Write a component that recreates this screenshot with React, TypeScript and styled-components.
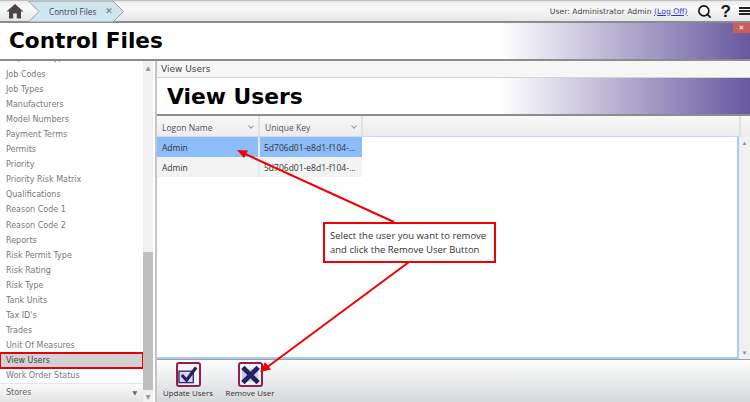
import styled, { createGlobalStyle } from "styled-components";
import { Search } from "lucide-react";

const MENU_ITEMS = [
  "Inspection Types",
  "Job Codes",
  "Job Types",
  "Manufacturers",
  "Model Numbers",
  "Payment Terms",
  "Permits",
  "Priority",
  "Priority Risk Matrix",
  "Qualifications",
  "Reason Code 1",
  "Reason Code 2",
  "Reports",
  "Risk Permit Type",
  "Risk Rating",
  "Risk Type",
  "Tank Units",
  "Tax ID's",
  "Trades",
  "Unit Of Measures",
  "View Users",
  "Work Order Status",
];

const GlobalStyle = createGlobalStyle`
  html, body {
    margin: 0;
    padding: 0;
    background: #fff;
  }
  * {
    box-sizing: border-box;
  }
`;

export default function App() {
  return (
    <Page>
      <GlobalStyle />
      <TopBar>
        <HomeCell>
          <svg width="18" height="16" viewBox="0 0 18 16">
            <path d="M9 1 L17.5 8.6 H15 V15.5 H10.8 V10.5 H7.2 V15.5 H3 V8.6 H.5 Z" fill="#4a4348" />
          </svg>
        </HomeCell>
        <Tab>
          <TabShape width="97" height="21" viewBox="0 0 97 21">
            <path d="M.5 0 H85 L95.5 10.5 L85 21 H.5 L11 10.5 Z" fill="#cfe6ef" stroke="#9a9ea0" />
          </TabShape>
          <TabLabel>Control Files</TabLabel>
          <TabClose>✕</TabClose>
        </Tab>
        <UserArea>
          <UserText>
            User: Administrator Admin <LogOff>(Log Off)</LogOff>
          </UserText>
          <Search size={15} strokeWidth={2.6} color="#111" />
          <Help>?</Help>
          <Burger>
            <span />
            <span />
            <span />
          </Burger>
        </UserArea>
      </TopBar>

      <TitleBand>
        <PageTitle>Control Files</PageTitle>
        <CloseBadge>✕</CloseBadge>
      </TitleBand>

      <Body>
        <Sidebar>
          <MenuColumn>
            <MenuList>
              {MENU_ITEMS.map((item) => (
                <MenuItem key={item} $active={item === "View Users"}>
                  {item}
                </MenuItem>
              ))}
            </MenuList>
            <StoresRow>
              Stores
              <Caret>▼</Caret>
            </StoresRow>
          </MenuColumn>
          <SideScroll>
            <ScrollArrow>▲</ScrollArrow>
            <SideThumb />
            <ScrollArrow>▼</ScrollArrow>
          </SideScroll>
        </Sidebar>

        <Main>
          <PanelHeader>View Users</PanelHeader>
          <PanelBand>
            <PanelTitle>View Users</PanelTitle>
          </PanelBand>
          <GridArea>
            <GridColumn>
              <GridHead>
                <HeadCell>
                  Logon Name
                  <Chevron />
                </HeadCell>
                <HeadCell>
                  Unique Key
                  <Chevron />
                </HeadCell>
              </GridHead>
              <GridBody>
                <GridRow $selected>
                  <NameCell>Admin</NameCell>
                  <KeyCell>5d706d01-e8d1-f104-...</KeyCell>
                </GridRow>
                <GridRow>
                  <NameCell>Admin</NameCell>
                  <KeyCell>5d706d01-e8d1-f104-...</KeyCell>
                </GridRow>
              </GridBody>
            </GridColumn>
            <GridScroll>
              <HeadStub />
              <ScrollTrack>
                <ScrollArrow>▲</ScrollArrow>
                <ScrollArrow>▼</ScrollArrow>
              </ScrollTrack>
            </GridScroll>
          </GridArea>
          <Footer>
            <FooterButton>
              <IconBox>
                <svg width="22" height="20" viewBox="0 0 22 20">
                  <rect x="1" y="6" width="15" height="12" fill="#d6d8e8" stroke="#2b2a6b" strokeWidth="1.4" />
                  <path d="M4 10 L9 15.5 L19 2" fill="none" stroke="#23215f" strokeWidth="3.4" />
                </svg>
              </IconBox>
              <FooterLabel>Update Users</FooterLabel>
            </FooterButton>
            <FooterButton>
              <IconBox>
                <svg width="22" height="20" viewBox="0 0 22 20">
                  <rect x="2" y="4" width="17" height="13" fill="#c9cbe0" />
                  <path d="M3 2 L19 18 M19 2 L3 18" stroke="#23215f" strokeWidth="5" />
                </svg>
              </IconBox>
              <FooterLabel>Remove User</FooterLabel>
            </FooterButton>
          </Footer>
        </Main>
      </Body>

      <Arrows width="750" height="402" viewBox="0 0 750 402">
        <path d="M394 222 L243 153" stroke="#f00000" strokeWidth="2" />
        <path d="M237 150 L248 150.5 L244 158 Z" fill="#f00000" />
        <path d="M409 262 L266 368" stroke="#f00000" strokeWidth="2" />
        <path d="M260 372 L265 362 L271 369.5 Z" fill="#f00000" />
      </Arrows>
      <Callout>
        Select the user you want to remove
        <br />
        and click the Remove User Button
      </Callout>
    </Page>
  );
}

const Page = styled.div`
  position: relative;
  width: 750px;
  height: 402px;
  overflow: hidden;
  display: flex;
  flex-direction: column;
  font-family: "DejaVu Sans", sans-serif;
  font-size: 8px;
  color: #444;
`;

const TopBar = styled.div`
  height: 23px;
  flex: none;
  display: flex;
  align-items: center;
  background: linear-gradient(#e9eaeb, #fafafa 30%, #e6e7e8);
  border-top: 1px solid #c0c0c0;
  border-bottom: 2px solid #8c8c8c;
`;

const HomeCell = styled.div`
  width: 28px;
  height: 100%;
  display: flex;
  align-items: center;
  justify-content: center;
  padding-left: 2px;
`;

const Tab = styled.div`
  position: relative;
  width: 97px;
  height: 100%;
  display: flex;
  align-items: center;
  padding-left: 21px;
`;

const TabShape = styled.svg`
  position: absolute;
  left: 0;
  top: 0;
`;

const TabLabel = styled.span`
  position: relative;
  font-family: "Open Sans", sans-serif;
  font-size: 8.2px;
  color: #3d4250;
`;

const TabClose = styled.span`
  position: relative;
  margin-left: 9px;
  font-size: 9px;
  color: #6c727a;
`;

const UserArea = styled.div`
  margin-left: auto;
  display: flex;
  align-items: center;
`;

const UserText = styled.span`
  font-size: 7.7px;
  color: #444;
  margin-right: 9px;
`;

const LogOff = styled.span`
  color: #3333dd;
  text-decoration: underline;
`;

const Help = styled.span`
  font-family: "Liberation Sans", sans-serif;
  font-size: 17px;
  line-height: 17px;
  font-weight: 700;
  color: #111;
  margin: 0 8px 0 9px;
`;

const Burger = styled.div`
  width: 11px;
  display: flex;
  flex-direction: column;
  gap: 1px;

  span {
    height: 2px;
    background: #222;
  }
`;

const TitleBand = styled.div`
  position: relative;
  height: 38px;
  flex: none;
  padding-left: 9px;
  display: flex;
  align-items: center;
  background: linear-gradient(90deg, #fff 500px, #67589f 750px);
  border-bottom: 2px solid #8c8c8c;
`;

const PageTitle = styled.h1`
  margin: 0;
  font-size: 21.6px;
  line-height: 1;
  font-weight: 700;
  color: #000;
`;

const CloseBadge = styled.span`
  position: absolute;
  right: 0;
  top: 0;
  width: 17px;
  height: 10px;
  display: flex;
  align-items: center;
  justify-content: center;
  background: #cd5c5c;
  color: #fff;
  font-size: 7px;
`;

const Body = styled.div`
  flex: 1;
  min-height: 0;
  display: flex;
`;

const Sidebar = styled.div`
  width: 153px;
  flex: none;
  display: flex;
`;

const MenuColumn = styled.div`
  width: 143px;
  display: flex;
  flex-direction: column;
`;

const MenuList = styled.div`
  flex: 1;
  min-height: 0;
  overflow: hidden;
  display: flex;
  flex-direction: column;
  justify-content: flex-end;
`;

const MenuItem = styled.div<{ $active?: boolean }>`
  height: 15.05px;
  flex: none;
  display: flex;
  align-items: center;
  padding-left: 6px;
  color: ${(p) => (p.$active ? "#444" : "#777")};
  background: ${(p) => (p.$active ? "#d2d2d2" : "transparent")};
  outline: ${(p) => (p.$active ? "2px solid #e3000f" : "none")};
  outline-offset: -1px;

  &:first-child {
    margin-bottom: 2px;
  }
`;

const StoresRow = styled.div`
  height: 19px;
  flex: none;
  display: flex;
  align-items: center;
  justify-content: space-between;
  padding: 0 6px 2px;
  background: linear-gradient(#fafafa, #e4e4e4);
  border-top: 1px solid #e4e4e4;
  color: #666;
`;

const Caret = styled.span`
  font-size: 6px;
  color: #666;
`;

const SideScroll = styled.div`
  width: 10px;
  display: flex;
  flex-direction: column;
  justify-content: space-between;
  background: #f0f0f0;
`;

const SideThumb = styled.div`
  height: 138px;
  margin-top: auto;
  background: #bfbfbf;
`;

const ScrollArrow = styled.span`
  height: 12px;
  flex: none;
  display: flex;
  align-items: center;
  justify-content: center;
  font-size: 6px;
  color: #909090;
`;

const Main = styled.div`
  flex: 1;
  min-width: 0;
  margin-left: 2px;
  display: flex;
  flex-direction: column;
  border-left: 2px solid #c4c4c4;
`;

const PanelHeader = styled.div`
  height: 17px;
  flex: none;
  display: flex;
  align-items: center;
  padding-left: 4px;
  font-size: 9px;
  color: #444;
  background: #f6f6f6;
  border-bottom: 1px solid #d4d4d4;
`;

const PanelBand = styled.div`
  height: 38px;
  flex: none;
  display: flex;
  align-items: center;
  padding: 2px 0 0 10px;
  background: linear-gradient(90deg, #fff 343px, #67589f 593px);
  border-bottom: 2px solid #8c8c8c;
`;

const PanelTitle = styled.h2`
  margin: 0;
  font-size: 21.8px;
  line-height: 1;
  font-weight: 700;
  color: #000;
`;

const GridArea = styled.div`
  flex: 1;
  min-height: 0;
  display: flex;
  font-family: "Open Sans", sans-serif;
  font-size: 8.5px;
`;

const GridColumn = styled.div`
  flex: 1;
  min-width: 0;
  display: flex;
  flex-direction: column;
`;

const GridHead = styled.div`
  height: 20px;
  flex: none;
  display: flex;
  background: linear-gradient(#f8f8f8, #ececec);
`;

const HeadCell = styled.div`
  width: 103px;
  height: 100%;
  display: flex;
  align-items: center;
  justify-content: space-between;
  padding: 2px 5px 0 5px;
  color: #555;
  border-right: 2px solid #e2e2e2;
`;

const Chevron = styled.i`
  width: 4px;
  height: 4px;
  margin: 0 0 3px;
  border-right: 1px solid #999;
  border-bottom: 1px solid #999;
  transform: rotate(45deg);
`;

const GridBody = styled.div`
  flex: 1;
  min-height: 0;
  border-right: 2px solid #a8cbf7;
  border-bottom: 2px solid #a8cbf7;
  border-top: 1px solid #c7dbf5;
`;

const GridRow = styled.div<{ $selected?: boolean }>`
  width: 205px;
  height: 20px;
  display: flex;
  align-items: center;
  color: #333;
  background: ${(p) => (p.$selected ? "#8dbdf8" : "#f3f3f3")};
`;

const NameCell = styled.div`
  width: 103px;
  height: 100%;
  display: flex;
  align-items: center;
  padding-left: 5px;
  border-right: 2px solid #e6eaf0;
`;

const KeyCell = styled.div`
  padding-left: 4px;
  white-space: nowrap;
`;

const GridScroll = styled.div`
  width: 11px;
  flex: none;
  display: flex;
  flex-direction: column;
  background: #f0f0f0;
`;

const HeadStub = styled.div`
  height: 21px;
  flex: none;
  background: linear-gradient(#f8f8f8, #ececec);
  border-left: 2px solid #e2e2e2;
`;

const ScrollTrack = styled.div`
  flex: 1;
  display: flex;
  flex-direction: column;
  justify-content: space-between;
`;

const Footer = styled.div`
  height: 43px;
  flex: none;
  display: flex;
  gap: 12px;
  padding: 2px 0 0 6px;
  background: linear-gradient(#fdfdfd, #d6d8db);
  border-top: 1px solid #a0a0a0;
  font-family: "Open Sans", sans-serif;
  font-size: 7.9px;
`;

const FooterButton = styled.div`
  width: 50px;
  display: flex;
  flex-direction: column;
  align-items: center;
`;

const IconBox = styled.div`
  width: 25px;
  height: 25px;
  display: flex;
  align-items: center;
  justify-content: center;
  background: #f4f4f6;
  border: 2px solid #92204f;
  border-radius: 3px;
`;

const FooterLabel = styled.span`
  margin-top: 1px;
  color: #333;
  white-space: nowrap;
`;

const Arrows = styled.svg`
  position: absolute;
  left: 0;
  top: 0;
  pointer-events: none;
`;

const Callout = styled.div`
  position: absolute;
  left: 323px;
  top: 222px;
  width: 173px;
  height: 41px;
  padding: 5px 0 0 5px;
  background: #fff;
  border: 2px solid #f00000;
  font-family: "Open Sans", sans-serif;
  font-size: 9.5px;
  line-height: 14px;
  color: #333;
  white-space: nowrap;
`;
